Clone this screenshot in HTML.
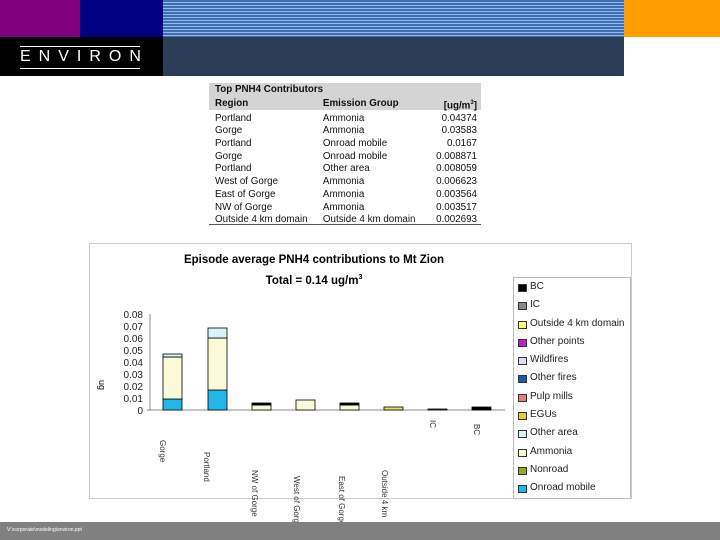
<!DOCTYPE html>
<html><head><style>
body{margin:0;width:720px;height:540px;position:relative;background:#fff;font-family:"Liberation Sans",sans-serif;overflow:hidden}
.a{position:absolute}
table{border-collapse:collapse;font-size:9.8px;color:#111}
td{padding:0 2px;height:12.7px;line-height:12.7px;white-space:nowrap}
.leg div{height:18.3px;font-size:10px;color:#222;line-height:18.3px;position:relative;padding-left:16px}
.leg span{position:absolute;left:4px;top:6px;width:7px;height:6px;border:1px solid #333}
</style></head><body>
<div class="a" style="left:0;top:0;width:80px;height:37px;background:#800080"></div>
<div class="a" style="left:80px;top:0;width:83px;height:37px;background:#000080"></div>
<div class="a" style="left:163px;top:0;width:461px;height:37px;background:repeating-linear-gradient(#3d6fb8 0 2px,#9ab8e4 2px 3px)"></div>
<div class="a" style="left:624px;top:0;width:96px;height:37px;background:#ff9e00"></div>
<div class="a" style="left:0;top:37px;width:163px;height:39px;background:#000"></div>
<div class="a" style="left:163px;top:37px;width:461px;height:39px;background:#2c3e57"></div>
<div class="a" style="left:20px;top:46px;width:120px;height:21px;border-top:1px solid #fff;border-bottom:1px solid #fff"></div>
<div class="a" style="left:20px;top:47px;color:#fff;font-size:16px;letter-spacing:8px;line-height:19px">ENVIRON</div>

<div class="a" style="left:209px;top:83px;width:272px;height:27px;background:#d4d4d4"></div>
<table class="a" style="left:213px;top:84px;width:266px">
<tr><td colspan=3 style="font-weight:bold">Top PNH4 Contributors</td></tr>
<tr style="font-weight:bold"><td>Region</td><td>Emission Group</td><td style="text-align:right">[ug/m<sup style="font-size:6px">3</sup>]</td></tr>
<tr><td>Portland</td><td>Ammonia</td><td align=right>0.04374</td></tr>
<tr><td>Gorge</td><td>Ammonia</td><td align=right>0.03583</td></tr>
<tr><td>Portland</td><td>Onroad mobile</td><td align=right>0.0167</td></tr>
<tr><td>Gorge</td><td>Onroad mobile</td><td align=right>0.008871</td></tr>
<tr><td>Portland</td><td>Other area</td><td align=right>0.008059</td></tr>
<tr><td>West of Gorge</td><td>Ammonia</td><td align=right>0.006623</td></tr>
<tr><td>East of Gorge</td><td>Ammonia</td><td align=right>0.003564</td></tr>
<tr><td>NW of Gorge</td><td>Ammonia</td><td align=right>0.003517</td></tr>
<tr><td>Outside 4 km domain</td><td>Outside 4 km domain</td><td align=right>0.002693</td></tr>
</table>
<div class="a" style="left:209px;top:224px;width:272px;height:1px;background:#555"></div>

<div class="a" style="left:89px;top:243px;width:541px;height:254px;border:1px solid #ccc"></div>
<div class="a" style="left:89px;top:252px;width:450px;text-align:center;font-weight:bold;font-size:11.5px;line-height:17px">Episode average PNH4 contributions to Mt Zion</div>
<div class="a" style="left:89px;top:269px;width:450px;text-align:center;font-weight:bold;font-size:11.5px;line-height:17px">Total = 0.14 ug/m<span style="font-size:7px;vertical-align:5px">3</span></div>
<div class="a leg" style="left:513px;top:277px;width:116px;height:220px;border:1px solid #bbb">
<div><span style="background:#000"></span>BC</div>
<div><span style="background:#888"></span>IC</div>
<div><span style="background:#ffff80"></span>Outside 4 km domain</div>
<div><span style="background:#c020c0"></span>Other points</div>
<div><span style="background:#dcdcf4"></span>Wildfires</div>
<div><span style="background:#1e5aa8"></span>Other fires</div>
<div><span style="background:#e08080"></span>Pulp mills</div>
<div><span style="background:#e8c840"></span>EGUs</div>
<div><span style="background:#d8f4f8"></span>Other area</div>
<div><span style="background:#fafad8"></span>Ammonia</div>
<div><span style="background:#90b020"></span>Nonroad</div>
<div><span style="background:#20b8e8"></span>Onroad mobile</div>
</div>
<svg class="a" style="left:0;top:0" width="720" height="540">
<g font-family="Liberation Sans" font-size="10" fill="#222" text-anchor="end">
<text x="143" y="318">0.08</text><text x="143" y="330">0.07</text><text x="143" y="342">0.06</text><text x="143" y="354">0.05</text><text x="143" y="366">0.04</text><text x="143" y="378">0.03</text><text x="143" y="390">0.02</text><text x="143" y="402">0.01</text><text x="143" y="414">0</text>
</g>
<text x="104" y="385" font-size="9" transform="rotate(90 104 380)">ug</text>
<line x1="150" y1="314" x2="150" y2="410" stroke="#888"/>
<line x1="147" y1="410" x2="505" y2="410" stroke="#888"/>
<g stroke="#000" stroke-width="0.8">
<rect x="163" y="399" width="19" height="11" fill="#20b8e8"/>
<rect x="163" y="357" width="19" height="42" fill="#fafad8"/>
<rect x="163" y="354" width="19" height="3" fill="#d8f4f8"/>
<rect x="208" y="390" width="19" height="20" fill="#20b8e8"/>
<rect x="208" y="338" width="19" height="52" fill="#fafad8"/>
<rect x="208" y="328" width="19" height="10" fill="#d8f4f8"/>
<rect x="252" y="405" width="19" height="5" fill="#fafad8"/>
<rect x="252" y="403" width="19" height="2" fill="#000"/>
<rect x="296" y="400" width="19" height="10" fill="#fafad8"/>
<rect x="340" y="405" width="19" height="5" fill="#fafad8"/>
<rect x="340" y="403" width="19" height="2" fill="#000"/>
<rect x="384" y="407" width="19" height="3" fill="#e8e060"/>
<rect x="428" y="409" width="19" height="1" fill="#888"/>
<rect x="472" y="407" width="19" height="3" fill="#000"/>
</g>
<g font-size="8" fill="#333">
<text x="168" y="448" transform="rotate(90 168 440)">Gorge</text>
<text x="212" y="460" transform="rotate(90 212 452)">Portland</text>
<text x="258" y="476" transform="rotate(90 258 470)">NW of Gorge</text>
<text x="300" y="482" transform="rotate(90 300 476)">West of Gorge</text>
<text x="345" y="482" transform="rotate(90 345 476)">East of Gorge</text>
<text x="388" y="476" transform="rotate(90 388 470)">Outside 4 km</text>
<text x="434" y="424" transform="rotate(90 434 420)">IC</text>
<text x="478" y="428" transform="rotate(90 478 424)">BC</text>
</g>
</svg>
<div class="a" style="left:0;top:522px;width:720px;height:18px;background:#808080"></div>
<div class="a" style="left:7px;top:527px;color:#fff;font-size:5px">V:\corporate\modeling\environ.ppt</div>
</body></html>
